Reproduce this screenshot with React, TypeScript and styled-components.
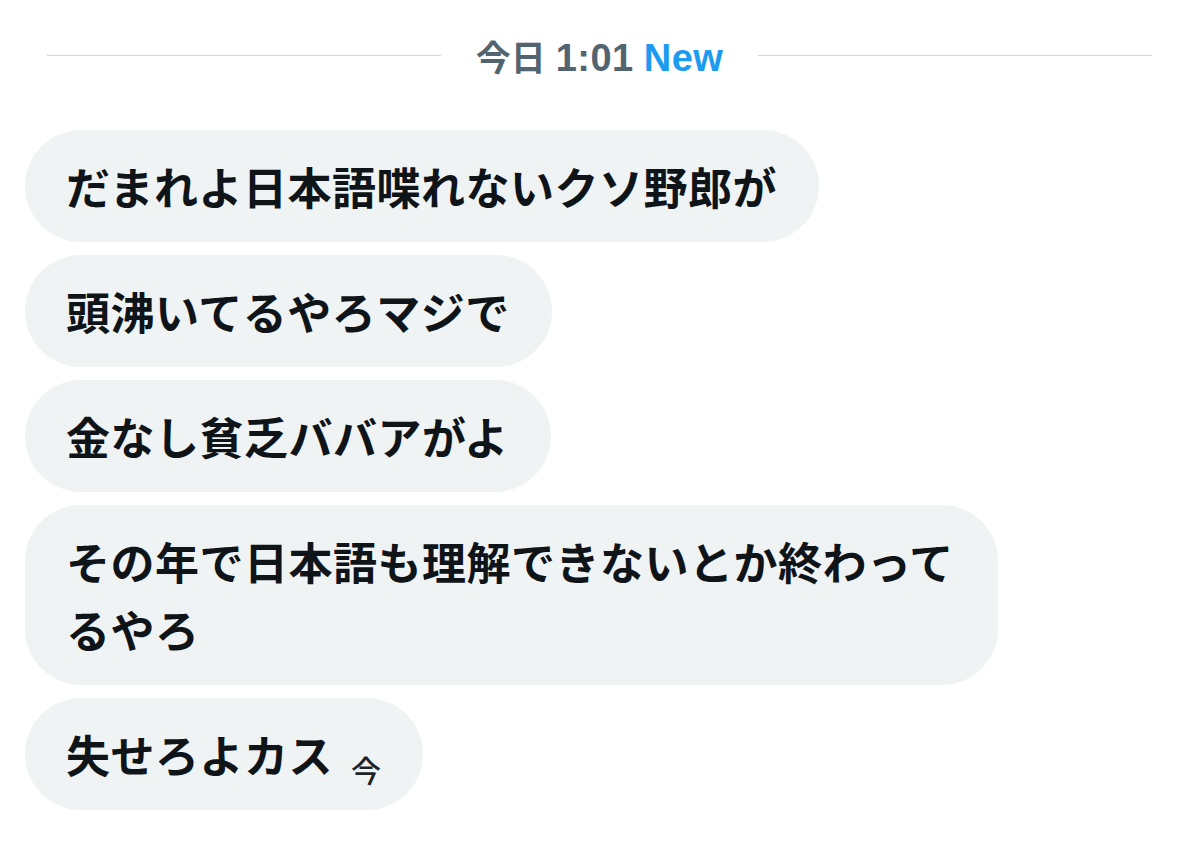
import React from "react";
import styled, { createGlobalStyle } from "styled-components";

const GlobalStyle = createGlobalStyle`
  html, body {
    margin: 0;
    padding: 0;
    background: #ffffff;
  }
  body {
    font-family: "Noto Sans CJK JP", "Noto Sans", sans-serif;
  }
`;

const Page = styled.div`
  width: 1200px;
  display: flex;
  flex-direction: column;
`;

const DateHeader = styled.div`
  height: 110px;
  display: flex;
  align-items: center;
  gap: 35px;
  padding: 0 48px 0 47px;
`;

const Rule = styled.div`
  flex: 1;
  height: 1px;
  background: #cfd9de;
`;

const DateText = styled.div`
  font-size: 35px;
  font-weight: 700;
  color: #536471;
  white-space: nowrap;
  display: flex;
  align-items: baseline;
  gap: 10px;
`;

const Latin = styled.span<{ $blue?: boolean }>`
  font-family: "Liberation Sans", "Noto Sans", sans-serif;
  font-size: 38px;
  letter-spacing: 0.5px;
  color: ${(p) => (p.$blue ? "#1d9bf0" : "#536471")};
`;

const Messages = styled.div`
  display: flex;
  flex-direction: column;
  align-items: flex-start;
  gap: 13px;
  padding: 20px 0 0 25px;
`;

const Bubble = styled.div`
  max-width: 973px;
  box-sizing: border-box;
  padding: 22px 42px 22px 41px;
  background: #eff3f4;
  border-radius: 56px;
  font-size: 44px;
  line-height: 68px;
  font-weight: 700;
  letter-spacing: 0.5px;
  color: #0f1419;
`;

const Stamp = styled.span`
  display: inline-block;
  font-size: 30px;
  line-height: 1;
  font-weight: 500;
  letter-spacing: 0;
  color: #1f2326;
  margin-left: 18px;
  vertical-align: -9px;
`;

const messages = [
  "だまれよ日本語喋れないクソ野郎が",
  "頭沸いてるやろマジで",
  "金なし貧乏ババアがよ",
  "その年で日本語も理解できないとか終わってるやろ",
];

export default function App() {
  return (
    <Page>
      <GlobalStyle />
      <DateHeader>
        <Rule />
        <DateText>
          今日 <Latin>1:01</Latin>
          <Latin $blue>New</Latin>
        </DateText>
        <Rule />
      </DateHeader>
      <Messages>
        {messages.map((m, i) => (
          <Bubble key={i}>{m}</Bubble>
        ))}
        <Bubble>
          失せろよカス<Stamp>今</Stamp>
        </Bubble>
      </Messages>
    </Page>
  );
}
